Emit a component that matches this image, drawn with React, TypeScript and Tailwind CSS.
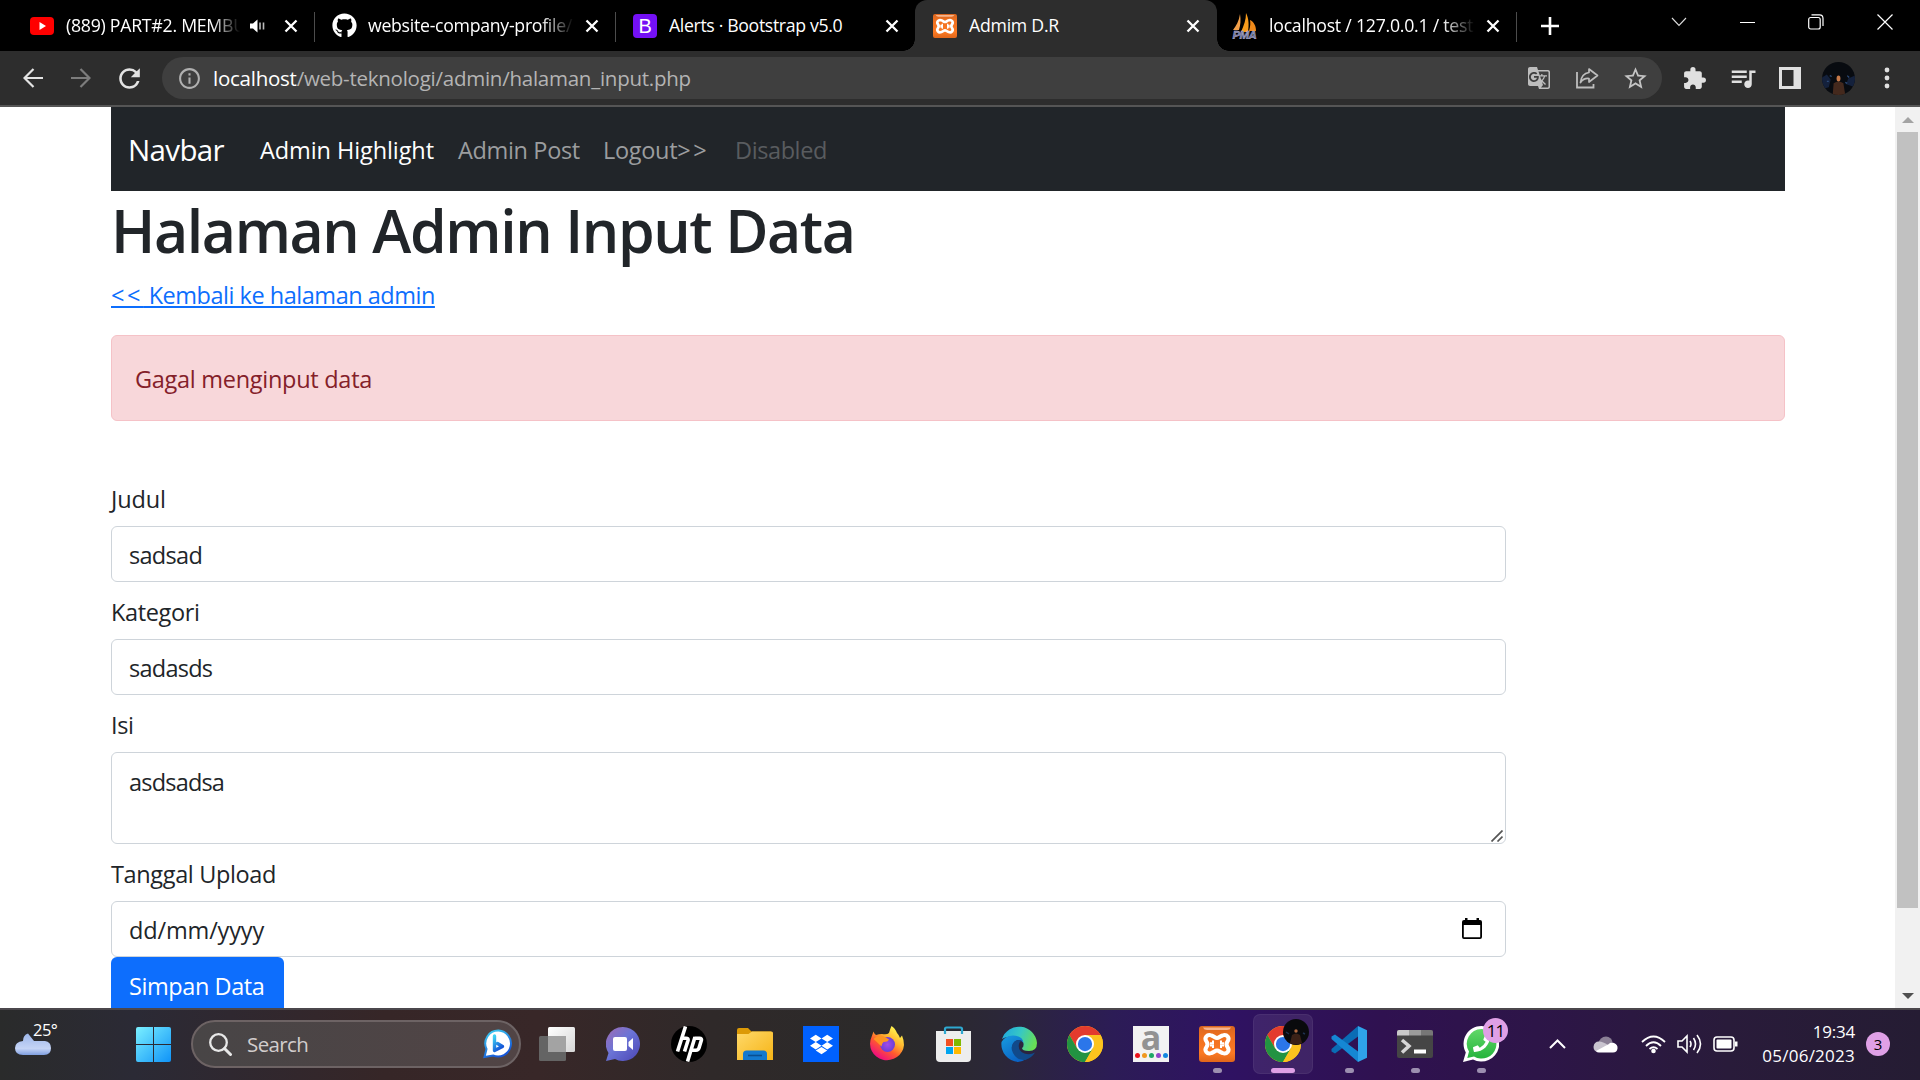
import type { ReactNode } from 'react';
import { FaGithub, FaDropbox, FaPhoneAlt } from 'react-icons/fa';
import { MdGTranslate, MdStarBorder, MdExtension, MdInfoOutline, MdQueueMusic, MdRefresh } from 'react-icons/md';

function XamppIcon({ size }: { size: number }) {
  return (
    <svg width={size} height={size} viewBox="0 0 36 36">
      <defs>
        <linearGradient id="xampp" x1="0" y1="0" x2="0" y2="1">
          <stop offset="0" stopColor="#d9661f" />
          <stop offset="0.3" stopColor="#f0701f" />
          <stop offset="0.75" stopColor="#fb7a24" />
          <stop offset="1" stopColor="#e0661a" />
        </linearGradient>
      </defs>
      <rect width="36" height="36" rx="3" fill="url(#xampp)" />
      <path d="M4 1.5H32Q31 4 28 4H8Q5 4 4 1.5Z" fill="#f6b48c" />
      <path
        d="M12.500 9.500C8 7.800 4.800 12 7.500 15.500C9 17.500 9 19 7.500 21C4.800 24.500 8 28.700 12.500 27C15.500 26 16 24.500 18 24.500C20 24.500 20.500 26 23.500 27C28 28.700 31.200 24.500 28.500 21C27 19 27 17.500 28.500 15.500C31.200 12 28 7.800 23.500 9.500C20.500 10.500 20 12 18 12C16 12 15.500 10.500 12.500 9.500Z"
        fill="none"
        stroke="#fff"
        strokeWidth="4"
      />
      <path d="M14 14.500V17.300H11M14 22V19.500H11M22 14.500V17.300H25M22 22V19.500H25" fill="none" stroke="#fff" strokeWidth="2" />
    </svg>
  );
}

function ChromeIcon() {
  return (
    <svg width="36" height="36" viewBox="0 0 48 48">
      <circle cx="24" cy="24" r="24" fill="#fcc31e" />
      <path d="M24 12H44.780A24 24 0 0 0 3.217 12.003L13.608 30Z" fill="#e33b2e" />
      <path d="M3.217 12.003A24 24 0 0 0 24.003 48L34.391 30L13.608 30Z" fill="#229342" />
      <path d="M24 12H44.780A24 24 0 0 1 24.003 48L34.391 30Z" fill="#fcc31e" />
      <circle cx="24" cy="24" r="12" fill="#fff" />
      <circle cx="24" cy="24" r="9.500" fill="#2b76ea" />
    </svg>
  );
}

function CloseX() {
  return (
    <svg width="14" height="14" viewBox="0 0 14 14" className="shrink-0">
      <path d="M1.500 1.500L12.500 12.500M12.500 1.500L1.500 12.500" stroke="#fff" strokeWidth="2.300" />
    </svg>
  );
}

function Tab({ icon, title, active, sep, audio, fade, className }: {
  icon: ReactNode; title: string; active?: boolean; sep?: boolean; audio?: boolean; fade?: boolean; className: string;
}) {
  return (
    <div className={`relative flex h-[51px] shrink-0 items-center pl-[18px] pr-[17px] ${active ? 'rounded-t-[12px] bg-[#2d2d2d]' : ''} ${className}`}>
      <div className="flex w-6 shrink-0 justify-center">{icon}</div>
      <div className={`ml-3 overflow-hidden whitespace-nowrap pb-px text-[17.7px] leading-6 text-white ${audio ? 'w-[174px]' : 'w-[206px]'} ${fade ? '[mask-image:linear-gradient(to_right,#000_84%,transparent_100%)]' : ''}`}>
        {title}
      </div>
      <div className="flex flex-1 items-center justify-end gap-[18px]">
        {audio && (
          <svg width="16" height="14" viewBox="0 0 16 14">
            <path d="M0 4.500H3L7.500 0.500V13.500L3 9.500H0Z" fill="#fff" />
            <path d="M10 3.500V10.500M13.500 3.500V10.500" stroke="#bbb" strokeWidth="1.600" />
          </svg>
        )}
        <CloseX />
      </div>
      {sep && <div className="absolute right-0 top-3 h-[30px] w-px bg-[#4c4c4c]" />}
      {active && (
        <>
          <div className="absolute -left-3 bottom-0 h-3 w-3 bg-[radial-gradient(circle_at_0_0,#000_11.5px,#2d2d2d_12px)]" />
          <div className="absolute -right-3 bottom-0 z-10 h-3 w-3 bg-[radial-gradient(circle_at_100%_0,#000_11.5px,#2d2d2d_12px)]" />
        </>
      )}
    </div>
  );
}

function TabStrip() {
  return (
    <div className="flex h-[51px] bg-black pl-3">
      <Tab
        sep audio fade className="w-[303px] tracking-[-0.25px]"
        title="(889) PART#2. MEMBUAT"
        icon={
          <svg width="24" height="18" viewBox="0 0 24 18">
            <rect width="24" height="18" rx="4" fill="#f00" />
            <path d="M9.500 5L16 9L9.500 13Z" fill="#fff" />
          </svg>
        }
      />
      <Tab sep fade className="-ml-px w-[302px] tracking-[-0.28px]" title="website-company-profile/" icon={<FaGithub size={25} color="#fff" className="shrink-0" />} />
      <Tab
        className="-ml-px w-[301px] tracking-[-0.35px]"
        title="Alerts · Bootstrap v5.0"
        icon={<div className="flex size-6 items-center justify-center rounded bg-[#7410f5] font-['Liberation_Sans'] text-[20px] text-white">B</div>}
      />
      <Tab active className="-ml-px w-[302px] tracking-[-0.25px]" title="Admim D.R" icon={<XamppIcon size={24} />} />
      <Tab
        sep fade className="-ml-[2px] w-[302px] tracking-[-0.24px]"
        title="localhost / 127.0.0.1 / test"
        icon={
          <svg width="26" height="26" viewBox="0 0 26 26" className="shrink-0">
            <path d="M8 1C9 7 8.500 12 7 17H1C4 13 7 8 8 1Z" fill="#f3a04a" />
            <path d="M14 0C17 6 17 12 16 19H9C12 12 14 7 14 0Z" fill="#f89c1c" />
            <path d="M18 7C22 9 24 13 24 18H17C18.500 13 18.500 10 18 7Z" fill="#ef8a1a" />
            <text x="0.500" y="25.500" fontSize="11.500" fontWeight="700" fontStyle="italic" fontFamily="Liberation Sans" textLength="24" fill="#6c6f9d" stroke="#c6c8e0" strokeWidth="0.400">PMA</text>
          </svg>
        }
      />
      <div className="flex flex-1 items-center pl-[24px]">
        <svg width="18" height="18" viewBox="0 0 18 18"><path d="M9 0V18M0 9H18" stroke="#fff" strokeWidth="2.600" /></svg>
      </div>
      <div className="flex h-[44px] w-[274px] items-center text-white">
        <svg width="16" height="10" viewBox="0 0 16 10" className="ml-[25px]"><path d="M1 1L8 8.500L15 1" fill="none" stroke="#ddd" strokeWidth="1.100" /></svg>
        <div className="ml-[53px] h-px w-[15px] bg-white" />
        <svg width="16" height="16" viewBox="0 0 16 16" className="ml-[53px]">
          <rect x="0.700" y="3.500" width="11.500" height="11.500" rx="2" fill="none" stroke="#fff" strokeWidth="1.200" />
          <path d="M3.500 0.800H11.500Q15 0.800 15 4.500V12" fill="none" stroke="#fff" strokeWidth="1.200" />
        </svg>
        <svg width="16" height="16" viewBox="0 0 16 16" className="ml-[53px]"><path d="M0.500 0.500L15.500 15.500M15.500 0.500L0.500 15.500" stroke="#fff" strokeWidth="1.200" /></svg>
      </div>
    </div>
  );
}

function Avatar({ size }: { size: number }) {
  return (
    <svg width={size} height={size} viewBox="0 0 34 34">
      <defs><clipPath id="av"><circle cx="17" cy="17" r="17" /></clipPath></defs>
      <g clipPath="url(#av)">
        <rect width="34" height="34" fill="#080b10" />
        <path d="M0 16L5 13L9 18L7 26L0 28ZM34 14L27 17L25 23L34 26Z" fill="#14213c" />
        <path d="M8 14l2 1M26 14l2 2M24 21l2 1M5 20l2 0" stroke="#2c4a78" strokeWidth="1.300" />
        <path d="M11 34L12 22Q17 18 22 22L24 34Z" fill="#44291d" />
        <ellipse cx="17" cy="17" rx="2" ry="3" fill="#c77a4a" />
      </g>
    </svg>
  );
}

function Toolbar() {
  return (
    <div className="flex h-[54px] items-center bg-[#2d2d2d]">
      <svg width="20" height="20" viewBox="0 0 20 20" className="ml-[23px]"><path d="M10.500 1L1.500 10L10.500 19M1.500 10H20" fill="none" stroke="#e3e3e3" strokeWidth="2.200" /></svg>
      <svg width="20" height="20" viewBox="0 0 20 20" className="ml-[28px]"><path d="M9.500 1L18.500 10L9.500 19M18.500 10H0" fill="none" stroke="#7c7c7c" strokeWidth="2.200" /></svg>
      <MdRefresh size={31} color="#e3e3e3" className="ml-[23px]" />
      <div className="ml-[17px] flex h-[42px] w-[1500px] items-center rounded-full bg-[#3f3f3f] text-[20.5px] leading-7 text-[#b4b4b4]">
        <MdInfoOutline size={25} color="#b0b0b0" className="ml-[15px]" />
        <div className="ml-[11px] flex-1 whitespace-nowrap tracking-[-0.25px]">
          <span className="text-white">localhost</span>/web-teknologi/admin/halaman_input.php
        </div>
        <MdGTranslate size={24} color="#bdbdbd" />
        <svg width="24" height="24" viewBox="0 0 24 24" className="ml-6">
          <path d="M2 6V21.500H18.500V18" fill="none" stroke="#bdbdbd" strokeWidth="1.800" />
          <path d="M14 3L22.500 9.500L14 16V12.500Q8.500 12 5.500 16.500Q6.500 7.500 14 6.500Z" fill="none" stroke="#bdbdbd" strokeWidth="1.700" strokeLinejoin="round" />
        </svg>
        <MdStarBorder size={27} color="#c4c4c4" className="ml-[23px] mr-[13px]" />
      </div>
      <MdExtension size={25} color="#e0e0e0" className="ml-[20px]" />
      <MdQueueMusic size={30} color="#e0e0e0" className="ml-[21px]" />
      <svg width="22" height="22" viewBox="0 0 22 22" className="ml-[21px]"><path fillRule="evenodd" d="M0 0H22V22H0ZM3 3H14.500V19H3Z" fill="#e0e0e0" /></svg>
      <div className="ml-[21px]"><Avatar size={33} /></div>
      <svg width="6" height="22" viewBox="0 0 6 22" className="ml-[29px]"><circle cx="3" cy="3" r="2.400" fill="#e0e0e0" /><circle cx="3" cy="11" r="2.400" fill="#e0e0e0" /><circle cx="3" cy="19" r="2.400" fill="#e0e0e0" /></svg>
    </div>
  );
}

function Label({ children, className }: { children: ReactNode; className: string }) {
  return <div className={`h-[46px] pt-px leading-9 ${className}`}>{children}</div>;
}

const field = 'flex w-[1395px] items-center rounded-[6px] border border-[#ced4da] bg-white pl-[17px] pt-[2px] leading-9';

function Page() {
  return (
    <div className="flex h-[901px] overflow-hidden bg-white text-[#212529]">
      <div className="h-[901px] w-[1895px] overflow-hidden pl-[111px] text-[23.5px]">
        <div className="flex h-[84px] w-[1674px] items-center bg-[#212529] pl-[17px] pt-[2px] leading-9 whitespace-nowrap">
          <div className="w-[132px] text-[29.5px] tracking-[-0.65px] text-white">Navbar</div>
          <div className="w-[198px] tracking-[-0.09px] text-white">Admin Highlight</div>
          <div className="w-[145px] tracking-[-0.35px] text-[#9b9d9f]">Admin Post</div>
          <div className="w-[132px] tracking-[-0.3px] text-[#9b9d9f]">Logout<span className="tracking-[2.5px]">&gt;&gt;</span></div>
          <div className="tracking-[-0.4px] text-[#595c5f]">Disabled</div>
        </div>
        <h1 className="mb-[10px] mt-[3px] whitespace-nowrap text-[59px] font-semibold leading-[72px] tracking-[-1.4px]">Halaman Admin Input Data</h1>
        <div className="h-[59px] pt-px leading-9">
          <a className="tracking-[-0.48px] text-[#0d6efd] underline decoration-2 underline-offset-[2px]"><span className="tracking-[2.6px]">&lt;&lt;</span> Kembali ke halaman admin</a>
        </div>
        <div className="mb-[59px] h-[86px] w-[1674px] rounded-[6px] border border-[#f5c2c7] bg-[#f8d7da] pl-[23px] pt-[25px] leading-9 tracking-[-0.28px] text-[#842029]">
          Gagal menginput data
        </div>
        <Label className="tracking-[-0.1px]">Judul</Label>
        <div className={`${field} mb-[11px] h-[56px] tracking-[-0.7px]`}>sadsad</div>
        <Label className="tracking-[-0.35px]">Kategori</Label>
        <div className={`${field} mb-[11px] h-[56px] tracking-[-0.75px]`}>sadasds</div>
        <Label className="tracking-[-0.4px]">Isi</Label>
        <div className={`${field} relative mb-[11px] h-[92px] pb-[35px] tracking-[-0.8px]`}>
          asdsadsa
          <svg width="12" height="12" viewBox="0 0 12 12" className="absolute bottom-[1px] right-[2px]"><path d="M0.500 11.500L11.500 0.500M6.500 11.500L11.500 6.500" stroke="#555" strokeWidth="1.700" /></svg>
        </div>
        <Label className="tracking-[-0.36px]">Tanggal Upload</Label>
        <div className={`${field} h-[56px] justify-between pr-[22px] tracking-[-0.15px]`}>
          dd/mm/yyyy
          <svg width="22" height="22" viewBox="0 0 22 22" className="mb-[2px]">
            <path d="M4 0H6.500V2H15.500V0H18V2H19Q21 2 21 4V19Q21 21 19 21H3Q1 21 1 19V4Q1 2 3 2H4ZM2.800 7V19.200H19.200V7Z" fill="#000" fillRule="evenodd" />
          </svg>
        </div>
        <div className="flex h-[57px] w-[173px] items-center rounded-[6px] bg-[#0d6efd] pl-[18px] pt-px leading-9 tracking-[-0.42px] text-white">Simpan Data</div>
      </div>
      <div className="flex w-[25px] flex-col items-center bg-[#f1f1f1]">
        <svg width="12" height="6" viewBox="0 0 12 6" className="mt-[10px]"><path d="M6 0L12 6H0Z" fill="#a3a3a3" /></svg>
        <div className="mt-[9px] h-[776px] w-[21px] bg-[#c1c1c1]" />
        <svg width="12" height="6" viewBox="0 0 12 6" className="mt-[85px]"><path d="M0 0H12L6 6Z" fill="#505050" /></svg>
      </div>
    </div>
  );
}

function TaskItem({ children, dot, active }: { children: ReactNode; dot?: boolean; active?: boolean }) {
  return (
    <div className="relative flex h-[70px] w-[66px] shrink-0 items-center justify-center pb-[2px]">
      {active && <div className="absolute inset-x-[3px] top-[4px] h-[60px] rounded-[7px] border border-white/5 bg-white/8" />}
      <div className="relative">{children}</div>
      {dot && <div className="absolute bottom-[7px] left-[29px] h-[5px] w-[9px] rounded-full bg-[#9c8fb0]" />}
      {active && <div className="absolute bottom-[7px] left-[21px] h-[5px] w-6 rounded-full bg-[#dfa0e6]" />}
    </div>
  );
}

function TaskApps() {
  return (
    <>
      <TaskItem>
        <svg width="36" height="34" viewBox="0 0 36 34">
          <defs><linearGradient id="tv" x1="0" y1="0" x2="1" y2="1"><stop offset="0" stopColor="#fff" /><stop offset="1" stopColor="#d6d6d6" /></linearGradient></defs>
          <rect x="9" y="0" width="27" height="25" rx="1.500" fill="url(#tv)" />
          <rect x="0" y="9" width="27" height="25" rx="1.500" fill="#646464" />
          <path d="M9 9H27V25H9Z" fill="#a3a3a3" />
        </svg>
      </TaskItem>
      <TaskItem>
        <svg width="34" height="34" viewBox="0 0 34 34">
          <defs><linearGradient id="chat" x1="0" y1="0" x2="1" y2="1"><stop offset="0" stopColor="#a06cb4" /><stop offset="0.450" stopColor="#6b74d6" /><stop offset="1" stopColor="#4b45b4" /></linearGradient></defs>
          <path d="M17 0A17 17 0 1 1 9 32L0 34L2.500 26A17 17 0 0 1 17 0Z" fill="url(#chat)" />
          <rect x="7" y="10" width="14" height="14" rx="2" fill="#fff" />
          <path d="M22.500 15L27 11V23L22.500 19Z" fill="#fff" />
        </svg>
      </TaskItem>
      <TaskItem>
        <svg width="36" height="36" viewBox="0 0 36 36">
          <circle cx="18" cy="18" r="18" fill="#000" />
          <path d="M14.500 0.500L6.500 25.500M10.500 12.200H15Q17.500 12.200 17 14.500L13.500 25.500M24 11L16.500 35.500M23.500 12.200H28.500Q31 12.200 30.300 14.500L28 22Q27.300 24.200 25 24.200H20.500" fill="none" stroke="#fff" strokeWidth="3.600" strokeLinejoin="round" />
        </svg>
      </TaskItem>
      <TaskItem>
        <svg width="36" height="33" viewBox="0 0 36 33">
          <defs><linearGradient id="fold" x1="0" y1="0" x2="1" y2="1"><stop offset="0" stopColor="#ffd96a" /><stop offset="1" stopColor="#f6b416" /></linearGradient></defs>
          <path d="M0 2Q0 0 2 0H11L14.500 3.500H34V12H0Z" fill="#dc9a07" />
          <path d="M0 6H11.500L15 3.500H34.500Q36 3.500 36 5V32H0Z" fill="url(#fold)" />
          <path d="M6 32V26Q6 22.500 9.500 22.500H26.500Q30 22.500 30 26V32Z" fill="#1379cf" />
          <path d="M11 27.500H25" stroke="#0a4e90" strokeWidth="1.600" />
        </svg>
      </TaskItem>
      <TaskItem>
        <div className="flex size-9 items-center justify-center bg-[#0061fe]"><FaDropbox size={23} color="#fff" /></div>
      </TaskItem>
      <TaskItem>
        <svg width="36" height="36" viewBox="0 0 36 36">
          <defs>
            <linearGradient id="ff" x1="0.800" y1="0.100" x2="0.250" y2="0.900"><stop offset="0" stopColor="#fff44f" /><stop offset="0.350" stopColor="#ffb52e" /><stop offset="0.650" stopColor="#ff5a2e" /><stop offset="1" stopColor="#f0127a" /></linearGradient>
            <radialGradient id="ffc"><stop offset="0" stopColor="#a34be8" /><stop offset="1" stopColor="#6a3fd8" /></radialGradient>
          </defs>
          <path d="M22.500 0Q26 2 28 7Q30 9 31 12L33 9.500Q35 14 35 19A17 16.500 0 1 1 2.500 11L4.500 5.500Q5 7.500 7 9Q10 8 13 8Q18 9 20 7Q21 3 22.500 0Z" fill="url(#ff)" />
          <circle cx="18.500" cy="18.500" r="7.500" fill="url(#ffc)" />
          <path d="M4.500 13Q10 7 16 11L20 13.500Q19 16 14.500 16Q12.500 18 12.500 20.500Q8 16 4.500 13Z" fill="#ff9422" />
        </svg>
      </TaskItem>
      <TaskItem>
        <svg width="35" height="36" viewBox="0 0 35 36">
          <path d="M0 5H35V32Q35 36 31 36H4Q0 36 0 32Z" fill="#ededed" />
          <path d="M9 8V3Q9 1.500 10.500 1.500H24.500Q26 1.500 26 3V8" fill="none" stroke="#2ea8d0" strokeWidth="2.200" />
          <path d="M10 13H17V20H10Z" fill="#f25022" /><path d="M18 13H25V20H18Z" fill="#7fba00" />
          <path d="M10 21H17V28H10Z" fill="#00a4ef" /><path d="M18 21H25V28H18Z" fill="#ffb900" />
        </svg>
      </TaskItem>
      <TaskItem>
        <svg width="36" height="36" viewBox="0 0 36 36">
          <defs>
            <linearGradient id="e1" x1="0" y1="0.200" x2="1" y2="0.500"><stop offset="0" stopColor="#1fa8e0" /><stop offset="0.500" stopColor="#37c8c4" /><stop offset="1" stopColor="#68de55" /></linearGradient>
            <linearGradient id="e2" x1="0" y1="0" x2="0.600" y2="1"><stop offset="0" stopColor="#189de0" /><stop offset="1" stopColor="#0a62c4" /></linearGradient>
          </defs>
          <path d="M1 13A18 18 0 0 1 36 17Q36 25 28 25Q21 25 21 22Q23 21 22.500 17.500Q21 11 13 10.500Q5 10 1 13Z" fill="url(#e1)" />
          <path d="M0.500 16Q4 9.500 12 9.500Q22 10 22.500 17Q19 12.500 14.500 15Q10 18 12 25Q15 32 25 33Q21 36 17 36A18 18 0 0 1 0.500 16Z" fill="url(#e2)" />
          <path d="M13.500 15.500Q8.500 20 12 27Q16 35 24.500 34Q31 31.500 34 26.500Q29 29.500 23.500 27.500Q16.500 24.500 18 18Q18.500 15 21 14.700Q17 13 13.500 15.500Z" fill="#114a8b" />
        </svg>
      </TaskItem>
      <TaskItem><ChromeIcon /></TaskItem>
      <TaskItem>
        <div className="flex size-9 flex-col items-center bg-[#f2f2f2]">
          <div className="-mt-[12px] h-[39px] font-bold text-[34px] leading-[46px] text-[#929292]">a</div>
          <div className="flex gap-[2px]">
            <div className="size-[5px] rounded-full bg-[#e8101a]" />
            <div className="size-[5px] rounded-full bg-[#f0981f]" />
            <div className="size-[5px] rounded-full bg-[#1fa866]" />
            <div className="size-[5px] rounded-full bg-[#9245cc]" />
            <div className="size-[5px] rounded-full bg-[#1388e0]" />
          </div>
        </div>
      </TaskItem>
      <TaskItem dot><XamppIcon size={36} /></TaskItem>
      <TaskItem active>
        <ChromeIcon />
        <div className="absolute -right-[8px] -top-[7px]">
          <svg width="26" height="26" viewBox="0 0 26 26"><circle cx="13" cy="13" r="13" fill="#090a0d" /><path d="M7 24L9 16Q13 13 17 16L19 24Q13 27 7 24Z" fill="#3a2117" /><circle cx="13" cy="12" r="1.700" fill="#b06a40" /><path d="M3 13l3 2M20 14l2 1" stroke="#1f3150" strokeWidth="1.500" /></svg>
        </div>
      </TaskItem>
      <TaskItem dot>
        <svg width="36" height="36" viewBox="0 0 36 36">
          <path d="M27 0L36 4.300V31.700L27 36Z" fill="#2fa3ea" />
          <path d="M27 0V10.500L4 27.500L0.500 25.500V23Z" fill="#0a6cb5" />
          <path d="M27 36V25.500L4 8.500L0.500 10.500V13Z" fill="#1587d3" />
        </svg>
      </TaskItem>
      <TaskItem dot>
        <svg width="36" height="28" viewBox="0 0 36 28">
          <rect width="36" height="28" rx="2" fill="#454545" />
          <path d="M0 5.500V2Q0 0 2 0H12V5.500Z" fill="#c9c9c9" /><path d="M12 0H24V5.500H12Z" fill="#9b9b9b" /><path d="M24 0H34Q36 0 36 2V5.500H24Z" fill="#777" />
          <path d="M5 10L12 16L5 22.500" fill="none" stroke="#d5d5d5" strokeWidth="3.500" /><path d="M17 21.500H29" stroke="#fff" strokeWidth="4" />
        </svg>
      </TaskItem>
      <TaskItem dot>
        <svg width="36" height="36" viewBox="0 0 36 36">
          <defs><linearGradient id="wa" x1="0" y1="0" x2="0" y2="1"><stop offset="0" stopColor="#62d869" /><stop offset="1" stopColor="#25b43c" /></linearGradient></defs>
          <path d="M18.500 0A17.800 17.800 0 1 1 10 33.500L0 36L2.800 26.500A17.800 17.800 0 0 1 18.500 0Z" fill="#fff" />
          <path d="M18.500 3A14.800 14.800 0 1 1 11 30.500L4.300 32L6 25.500A14.800 14.800 0 0 1 18.500 3Z" fill="url(#wa)" />
        </svg>
        <FaPhoneAlt size={17} color="#fff" className="absolute left-[10px] top-[9px] -scale-x-100" />
        <div className="absolute -right-[9px] -top-[8px] flex size-[25px] items-center justify-center rounded-full bg-[#dfa0e6] text-[17px] tracking-[-1px] text-black">11</div>
      </TaskItem>
    </>
  );
}

function Taskbar() {
  return (
    <div className="flex h-[72px] items-start border-t-2 border-[#4b474c] bg-[linear-gradient(90deg,#2a2b2b_0%,#2b2a35_7%,#2f2830_12%,#362627_20%,#382728_28%,#2f2929_37%,#2b2a2a_47%,#2b2738_52%,#2c1c56_58%,#2f1262_64%,#2f1150_72%,#2d1548_80%,#291b3a_90%,#251c33_100%)] text-white">
      <div className="relative ml-[15px] mt-[10px] h-[50px] w-[121px]">
        <svg width="37" height="23" viewBox="0 0 37 23" className="mt-[13px]">
          <defs><linearGradient id="cl" x1="0" y1="0" x2="0" y2="1"><stop offset="0" stopColor="#9db6ea" /><stop offset="0.700" stopColor="#c5d4f6" /><stop offset="1" stopColor="#7f9fe0" /></linearGradient></defs>
          <path d="M8 8Q8 2 13 0.500L19 8H30Q36 9 36 15Q36 22 29 22H8Q0 22 0 15Q0 9 8 8Z" fill="url(#cl)" />
        </svg>
        <div className="absolute left-[18px] top-[-2px] text-[16.5px] leading-6 tracking-[-0.5px]">25°</div>
      </div>
      <svg width="35" height="35" viewBox="0 0 35 35" className="mt-[17px]">
        <defs><linearGradient id="win" x1="0" y1="0" x2="1" y2="1"><stop offset="0" stopColor="#7bf0ff" /><stop offset="1" stopColor="#0f93f8" /></linearGradient></defs>
        <path d="M2 0H17V17H0V2Q0 0 2 0ZM18 0H33Q35 0 35 2V17H18ZM0 18H17V35H2Q0 35 0 33ZM18 18H35V33Q35 35 33 35H18Z" fill="url(#win)" />
      </svg>
      <div className="ml-[20px] mt-[10px] flex h-[48px] w-[330px] items-center rounded-full border-2 border-[#6d6364] bg-[linear-gradient(90deg,#484546,#514445)] pl-[16px] pr-[6px]">
        <svg width="23" height="23" viewBox="0 0 23 23"><circle cx="9.500" cy="9.500" r="8.300" fill="none" stroke="#e8e8e8" strokeWidth="2.300" /><path d="M15.500 15.500L21.500 21.500" stroke="#e8e8e8" strokeWidth="3" strokeLinecap="round" /></svg>
        <div className="ml-[15px] flex-1 text-[20.5px] leading-7 tracking-[-0.6px] text-[#d2cdcd]">Search</div>
        <svg width="30" height="30" viewBox="0 0 30 30">
          <defs><linearGradient id="bing" x1="0" y1="0" x2="0.500" y2="1"><stop offset="0" stopColor="#3fd3f2" /><stop offset="1" stopColor="#1556d8" /></linearGradient></defs>
          <path d="M15.500 1.500A13 13 0 1 1 10 26.500L1.500 28L3.500 20A13 13 0 0 1 15.500 1.500Z" fill="#fff" stroke="url(#bing)" strokeWidth="2" />
          <path d="M11.500 7V21.500L19.500 17.500L14.500 14.500" fill="none" stroke="url(#bing)" strokeWidth="3.400" strokeLinejoin="round" strokeLinecap="round" />
        </svg>
      </div>
      <div className="ml-[3px] flex flex-1"><TaskApps /></div>
      <div className="mt-[19px] flex h-[30px] w-[371px] shrink-0 items-center">
        <svg width="17" height="10" viewBox="0 0 17 10" className="shrink-0"><path d="M1 9L8.500 1.500L16 9" fill="none" stroke="#fff" strokeWidth="2" /></svg>
        <svg width="25" height="17" viewBox="0 0 25 17" className="ml-[27px] shrink-0">
          <path d="M5 8Q7 0.500 13 0.500Q18.500 1 19.500 6L13 10Z" fill="#8b8096" />
          <path d="M0.500 11Q1 5.500 6 5.500Q10 5.500 15 9L6 16Q0.500 16 0.500 11Z" fill="#c9c4cf" />
          <path d="M3 15L15 8.500Q18 5.500 21 7Q25 8.500 24.500 12.500Q24 16.500 20 16.500H6Q4 16.500 3 15Z" fill="#fff" />
        </svg>
        <svg width="25" height="19" viewBox="0 0 25 19" className="ml-[23px] shrink-0">
          <path d="M1 7Q12.500 -4 24 7M5 11Q12.500 3.500 20 11M8.500 14Q12.500 10.500 16.500 14" fill="none" stroke="#fff" strokeWidth="1.800" />
          <circle cx="12.500" cy="16" r="2.300" fill="#fff" />
        </svg>
        <svg width="25" height="20" viewBox="0 0 25 20" className="ml-[11px] shrink-0">
          <path d="M1 7H5L10 2V18L5 13H1ZM13 7Q15 10 13 13M16.500 4Q20.500 10 16.500 16M20 1Q27 10 20 19" fill="none" stroke="#fff" strokeWidth="1.600" />
        </svg>
        <svg width="25" height="16" viewBox="0 0 25 16" className="ml-[11px] shrink-0">
          <rect x="1" y="1" width="20" height="14" rx="3" fill="none" stroke="#fff" strokeWidth="1.600" /><rect x="3.500" y="3.500" width="15" height="9" rx="1" fill="#fff" /><path d="M22 5.500H24.500V10.500H22Z" fill="#fff" />
        </svg>
        <div className="ml-[24px] w-[93px] shrink-0 whitespace-nowrap text-right text-[17px] leading-6">
          <div className="tracking-[-0.2px]">19:34</div>
          <div className="tracking-[0.25px]">05/06/2023</div>
        </div>
        <div className="ml-[11px] flex size-6 shrink-0 items-center justify-center rounded-full bg-[#dfa0e6] text-[15px] text-black">3</div>
      </div>
    </div>
  );
}

export default function App() {
  return (
    <div className="h-[1080px] w-[1920px] overflow-hidden bg-white font-['Open_Sans',sans-serif]">
      <TabStrip />
      <Toolbar />
      <div className="h-[2px] bg-[#555]" />
      <Page />
      <Taskbar />
    </div>
  );
}
